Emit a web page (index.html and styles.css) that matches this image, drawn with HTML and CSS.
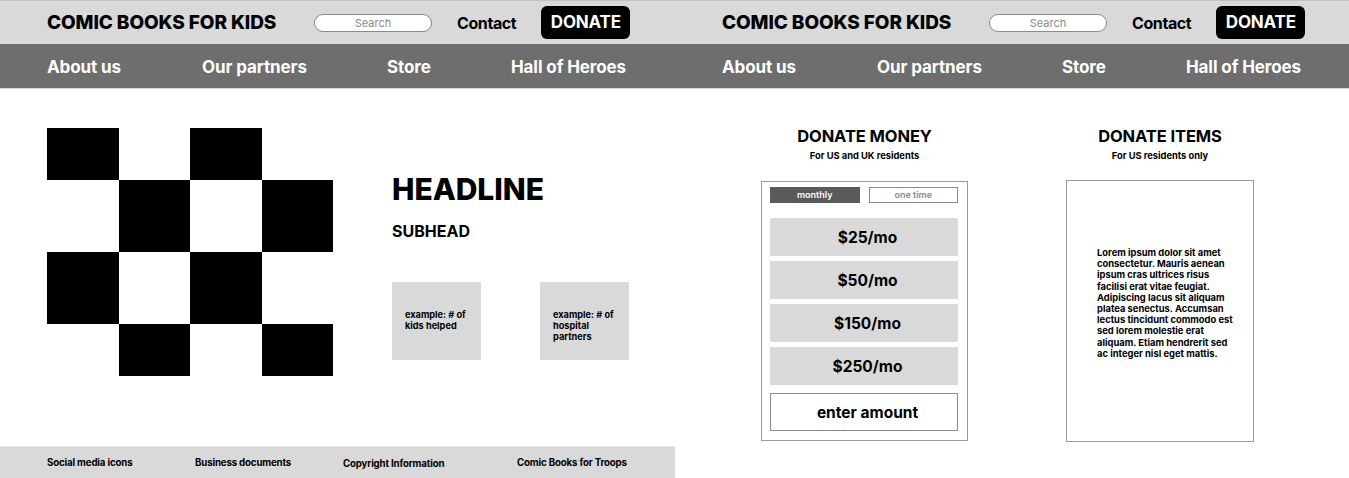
FILE: index.html
```html
<!DOCTYPE html>
<html lang="en">
<head>
<meta charset="utf-8">
<title>Comic Books for Kids</title>
<link rel="stylesheet" href="styles.css">
</head>
<body>
<div class="page">
  <section class="panel panel-home">
    <header class="topbar">
      <div class="brand">COMIC BOOKS FOR KIDS</div>
      <div class="search">Search</div>
      <a class="contact">Contact</a>
      <a class="donate-btn">DONATE</a>
    </header>
    <nav class="mainnav">
      <a class="nav-about">About us</a>
      <a class="nav-partners">Our partners</a>
      <a class="nav-store">Store</a>
      <a class="nav-heroes">Hall of Heroes</a>
    </nav>
    <main class="hero">
      <div class="checker">
        <div class="sq b"></div><div class="sq"></div><div class="sq b"></div><div class="sq"></div>
        <div class="sq"></div><div class="sq b"></div><div class="sq"></div><div class="sq b"></div>
        <div class="sq b"></div><div class="sq"></div><div class="sq b"></div><div class="sq"></div>
        <div class="sq"></div><div class="sq b"></div><div class="sq"></div><div class="sq b"></div>
      </div>
      <div class="hero-text">
        <h1 class="headline">HEADLINE</h1>
        <h2 class="subhead">SUBHEAD</h2>
        <div class="stats">
          <div class="stat">example: # of kids helped</div>
          <div class="stat">example: # of hospital partners</div>
        </div>
      </div>
    </main>
    <footer class="footer">
      <span class="f1">Social media icons</span>
      <span class="f2">Business documents</span>
      <span class="f3">Copyright Information</span>
      <span class="f4">Comic Books for Troops</span>
    </footer>
  </section>
  <section class="panel panel-donate">
    <header class="topbar">
      <div class="brand">COMIC BOOKS FOR KIDS</div>
      <div class="search">Search</div>
      <a class="contact">Contact</a>
      <a class="donate-btn">DONATE</a>
    </header>
    <nav class="mainnav">
      <a class="nav-about">About us</a>
      <a class="nav-partners">Our partners</a>
      <a class="nav-store">Store</a>
      <a class="nav-heroes">Hall of Heroes</a>
    </nav>
    <main class="donate">
      <div class="col col-money">
        <h2 class="col-title">DONATE MONEY</h2>
        <p class="col-sub">For US and UK residents</p>
        <div class="money-box">
          <div class="toggle">
            <span class="tog active">monthly</span>
            <span class="tog">one time</span>
          </div>
          <div class="amounts">
            <div class="amount">$25/mo</div>
            <div class="amount">$50/mo</div>
            <div class="amount">$150/mo</div>
            <div class="amount">$250/mo</div>
          </div>
          <div class="enter">enter amount</div>
        </div>
      </div>
      <div class="col col-items">
        <h2 class="col-title">DONATE ITEMS</h2>
        <p class="col-sub">For US residents only</p>
        <div class="items-box">
          <p>Lorem ipsum dolor sit amet consectetur. Mauris aenean ipsum cras ultrices risus facilisi erat vitae feugiat. Adipiscing lacus sit aliquam platea senectus. Accumsan lectus tincidunt commodo est sed lorem molestie erat aliquam. Etiam hendrerit sed ac integer nisl eget mattis.</p>
        </div>
      </div>
    </main>
  </section>
</div>
</body>
</html>
```

FILE: styles.css
```css
* { box-sizing: border-box; }
html, body { margin: 0; padding: 0; background: #fff; }
body {
  font-family: Inter, "Liberation Sans", sans-serif;
  color: #000;
  width: 1349px;
  height: 478px;
  overflow: hidden;
}
a { color: inherit; text-decoration: none; }
h1, h2, p { margin: 0; }

.page { display: flex; height: 478px; }
.panel { display: flex; flex-direction: column; height: 478px; }
.panel-home { width: 675px; }
.panel-donate { width: 674px; }

/* top bar */
.topbar {
  height: 44px;
  background: #d9d9d9;
  border-top: 1px solid #c4c4c4;
  display: flex;
  align-items: center;
  padding-left: 47px;
}
.brand {
  font-weight: 800;
  font-size: 19px;
  letter-spacing: -0.1px;
  width: 267px;
  white-space: nowrap;
}
.search {
  width: 118px;
  height: 18px;
  border: 1px solid #8a8a8a;
  border-radius: 9px;
  background: #fff;
  color: #8a8a8a;
  font-size: 11px;
  line-height: 16px;
  text-align: center;
}
.contact {
  margin-left: 25px;
  font-weight: 700;
  font-size: 16px;
  letter-spacing: -0.4px;
}
.donate-btn {
  margin-left: 25px;
  width: 89px;
  height: 33px;
  margin-top: -1px;
  background: #000;
  color: #fff;
  border-radius: 6px;
  font-weight: 700;
  font-size: 17px;
  letter-spacing: -0.2px;
  display: flex;
  align-items: center;
  justify-content: center;
  padding-bottom: 1px;
}

/* main nav */
.mainnav {
  height: 45px;
  background: #6e6e6e;
  border-bottom: 1px solid #d9d9d9;
  display: flex;
  align-items: center;
  padding-left: 47px;
  padding-top: 2px;
  color: #fff;
  font-weight: 700;
  font-size: 17px;
  letter-spacing: -0.1px;
}
.nav-about { width: 155px; }
.nav-partners { width: 185px; }
.nav-store { width: 124px; }

/* hero */
.hero {
  flex: 1;
  display: flex;
  padding: 39px 0 0 47px;
}
.checker {
  display: grid;
  grid-template-columns: 72px 71px 72px 71px;
  grid-template-rows: 52px 72px 72px 52px;
  height: 248px;
}
.sq.b { background: #000; }
.hero-text { margin-left: 59px; padding-top: 43px; }
.headline {
  font-weight: 800;
  font-size: 30px;
  line-height: 36px;
  letter-spacing: -0.05px;
}
.subhead {
  margin-top: 14px;
  font-weight: 700;
  font-size: 16px;
  line-height: 20px;
}
.stats { display: flex; gap: 59px; margin-top: 41px; }
.stat {
  width: 89px;
  height: 78px;
  background: #d9d9d9;
  font-weight: 700;
  font-size: 9.2px;
  line-height: 11px;
  padding: 27px 10px 0 13px;
}

/* footer */
.footer {
  height: 32px;
  background: #d9d9d9;
  border-top: 1px solid #e6e6e6;
  display: flex;
  align-items: center;
  padding-left: 47px;
  font-weight: 700;
  font-size: 9.7px;
  letter-spacing: -0.15px;
}
.f1 { width: 148px; }
.f2 { width: 148px; }
.f3 { width: 174px; padding-top: 2px; }

/* donate panel */
.donate {
  flex: 1;
  display: flex;
  gap: 98px;
  padding: 37px 0 0 86px;
}
.col { display: flex; flex-direction: column; align-items: center; }
.col-money { width: 207px; }
.col-items { width: 188px; }
.col-title {
  font-weight: 700;
  font-size: 16.5px;
  line-height: 20px;
  letter-spacing: -0.1px;
}
.col-sub {
  margin-top: 4px;
  font-weight: 700;
  font-size: 9.3px;
  line-height: 12px;
}
.money-box {
  margin-top: 19px;
  width: 207px;
  height: 260px;
  border: 1px solid #9a9a9a;
  padding: 5px 9px 0 8px;
}
.toggle { display: flex; gap: 9px; }
.tog {
  width: 90px;
  height: 16px;
  border: 1px solid #8a8a8a;
  color: #8a8a8a;
  font-weight: 600;
  font-size: 9px;
  line-height: 14px;
  text-align: center;
}
.tog.active { background: #5a5a5a; color: #fff; border-color: #5a5a5a; }
.amounts {
  margin-top: 15px;
  display: flex;
  flex-direction: column;
  gap: 5px;
}
.amount, .enter {
  height: 38px;
  background: #d9d9d9;
  display: flex;
  align-items: center;
  justify-content: center;
  padding-left: 7px;
  font-weight: 700;
  font-size: 15.5px;
}
.enter {
  margin-top: 8px;
  background: #fff;
  border: 1px solid #8a8a8a;
}
.items-box {
  margin-top: 18px;
  width: 188px;
  height: 262px;
  border: 1px solid #9a9a9a;
  display: flex;
  align-items: center;
  padding: 0 18px 16px 30px;
}
.items-box p {
  font-weight: 700;
  font-size: 9.4px;
  line-height: 11.2px;
}
```
